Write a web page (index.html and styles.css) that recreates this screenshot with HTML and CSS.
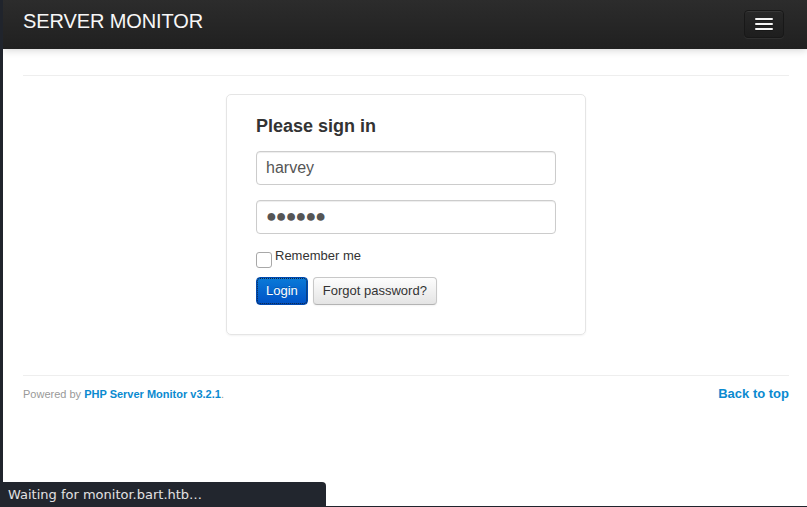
FILE: index.html
```html
<!DOCTYPE html>
<html lang="en">
<head>
<meta charset="utf-8">
<title>Server Monitor</title>
<link rel="stylesheet" href="styles.css">
</head>
<body>
<header class="navbar">
  <a class="brand" href="#">SERVER MONITOR</a>
  <button class="btn-navbar" type="button" aria-label="Menu">
    <span class="icon-bar"></span>
    <span class="icon-bar"></span>
    <span class="icon-bar"></span>
  </button>
</header>
<main class="container">
  <hr class="rule rule-top">
  <form class="form-signin">
    <h2 class="form-heading">Please sign in</h2>
    <input class="field" type="text" value="harvey">
    <input class="field field-pass" type="text" value="●●●●●●">
    <label class="remember"><span class="check"></span><span>Remember me</span></label>
    <div class="actions">
      <button class="btn btn-primary" type="button">Login</button>
      <button class="btn btn-default" type="button">Forgot password?</button>
    </div>
  </form>
  <hr class="rule">
  <footer class="footer">
    <p class="powered">Powered by <a href="#">PHP Server Monitor v3.2.1</a>.</p>
    <a class="back-top" href="#">Back to top</a>
  </footer>
</main>
<div class="statusbar">Waiting for monitor.bart.htb…</div>
</body>
</html>
```
FILE: styles.css
```css
* { box-sizing: border-box; }
html, body { height: 100%; }
body {
  margin: 0;
  background: #fff;
  border-left: 3px solid #20242c;
  border-bottom: 1px solid #20242c;
  font-family: "Liberation Sans", Arial, sans-serif;
  color: #333;
  font-size: 14px;
  line-height: 20px;
}
.navbar {
  height: 49px;
  background: linear-gradient(#2c2c2c, #202020);
  box-shadow: 0 1px 8px rgba(0,0,0,.18);
  display: flex;
  align-items: center;
  justify-content: space-between;
  padding: 0 23px 0 20px;
  position: relative;
}
.brand {
  color: #f7f7f7;
  font-size: 20px;
  text-decoration: none;
  line-height: 24px;
  margin-top: -7px;
  letter-spacing: -0.1px;
}
.btn-navbar {
  width: 40px;
  height: 28px;
  margin-top: -1px;
  border-radius: 4px;
  border: 1px solid #181818;
  background: linear-gradient(#282828, #1e1e1e);
  box-shadow: inset 0 1px 0 rgba(255,255,255,.08), 0 1px 0 rgba(255,255,255,.06);
  display: flex;
  flex-direction: column;
  align-items: center;
  justify-content: center;
  gap: 3px;
  padding: 0;
}
.icon-bar {
  display: block;
  width: 18px;
  height: 2px;
  border-radius: 1px;
  background: #f5f5f5;
  box-shadow: 0 1px 0 rgba(0,0,0,.25);
}
.container {
  padding: 26px 18px 0 20px;
}
.rule {
  border: 0;
  border-top: 1px solid #eee;
  margin: 0;
}
.form-signin {
  width: 360px;
  margin: 18px auto 40px;
  padding: 20px 29px 29px;
  border: 1px solid #e5e5e5;
  border-radius: 5px;
  box-shadow: 0 1px 2px rgba(0,0,0,.05);
  display: flex;
  flex-direction: column;
}
.form-heading {
  margin: 0 0 14px;
  font-size: 18px;
  line-height: 22px;
  font-weight: bold;
  color: #333;
}
.field {
  display: block;
  width: 300px;
  height: 34px;
  padding: 7px 9px;
  margin: 0 0 15px;
  border: 1px solid #ccc;
  border-radius: 4px;
  box-shadow: inset 0 1px 1px rgba(0,0,0,.075);
  font-family: "Liberation Sans", Arial, sans-serif;
  font-size: 16px;
  line-height: 18px;
  color: #555;
  background: #fff;
}
.field-pass {
  margin-bottom: 13px;
  font-size: 18px;
  letter-spacing: -1px;
  padding: 6px 9px 7px;
}
.remember {
  display: flex;
  align-items: flex-start;
  gap: 3px;
  height: 21px;
  margin-bottom: 9px;
  color: #333;
  font-size: 13px;
  line-height: 18px;
}
.check {
  width: 16px;
  height: 16px;
  margin-top: 5px;
  border: 1px solid #a8a8a8;
  border-radius: 3px;
  background: #fff;
}
.actions {
  display: flex;
  gap: 5px;
}
.btn {
  height: 28px;
  padding: 0 9px;
  border-radius: 4px;
  font-family: "Liberation Sans", Arial, sans-serif;
  font-size: 13px;
  line-height: 26px;
  cursor: pointer;
}
.btn-primary {
  color: #fff;
  background: linear-gradient(#0a7ad8, #0052c6);
  border: 1px solid #0049b0;
  outline: 1px dotted #10243f;
  outline-offset: -2px;
  text-shadow: 0 -1px 0 rgba(0,0,0,.2);
}
.btn-default {
  color: #333;
  background: linear-gradient(#fdfdfd, #e4e4e4);
  border: 1px solid #c8c8c8;
  border-bottom-color: #b3b3b3;
  box-shadow: inset 0 1px 0 rgba(255,255,255,.2), 0 1px 2px rgba(0,0,0,.05);
}
.footer {
  display: flex;
  justify-content: space-between;
  align-items: baseline;
  padding-top: 8px;
}
.powered {
  margin: 0;
  font-size: 11px;
  color: #999;
}
.powered a {
  color: #0a8ad0;
  font-weight: bold;
  text-decoration: none;
}
.back-top {
  color: #0a8ad0;
  font-weight: bold;
  font-size: 13px;
  text-decoration: none;
}
.statusbar {
  position: fixed;
  left: 0;
  bottom: 0;
  width: 326px;
  height: 25px;
  background: #22262e;
  border-top-right-radius: 4px;
  color: #e2e2e2;
  font-family: "DejaVu Sans", sans-serif;
  font-size: 13px;
  line-height: 25px;
  padding-left: 8px;
}
```
